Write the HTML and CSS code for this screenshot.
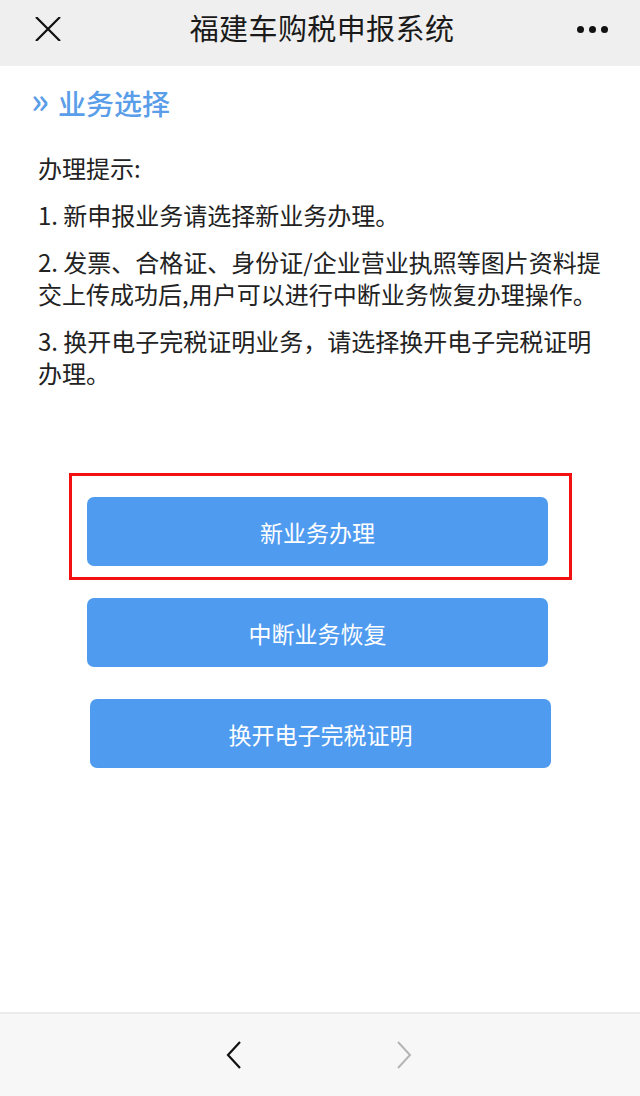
FILE: index.html
```html
<!DOCTYPE html>
<html lang="zh-CN">
<head>
  <meta charset="UTF-8">
  <meta name="viewport" content="width=device-width, initial-scale=1.0">
  <title>福建车购税申报系统</title>
  <link rel="stylesheet" href="styles.css">
</head>
<body>
<div class="page">
  <div class="topbar">
    <span class="icon-close">
      <svg width="26" height="24" viewBox="0 0 26 24">
        <path d="M1 0 L25 24 M25 0 L1 24" stroke="#111" stroke-width="2.2" fill="none"/>
      </svg>
    </span>
    <h1 class="topbar-title">福建车购税申报系统</h1>
    <span class="icon-more">
      <i></i><i></i><i></i>
    </span>
  </div>

  <div class="content">
    <h2 class="section-title"><span class="arrows">»</span>业务选择</h2>

    <div class="tips">
      <p>办理提示:</p>
      <p>1. 新申报业务请选择新业务办理。</p>
      <p>2. 发票、合格证、身份证/企业营业执照等图片资料提<br>交上传成功后,用户可以进行中断业务恢复办理操作。</p>
      <p>3. 换开电子完税证明业务，请选择换开电子完税证明<br>办理。</p>
    </div>

    <div class="actions">
      <div class="highlight">
        <button class="btn">新业务办理</button>
      </div>
      <button class="btn btn-resume">中断业务恢复</button>
      <button class="btn btn-reissue">换开电子完税证明</button>
    </div>
  </div>

  <div class="bottombar">
    <svg width="18" height="30" viewBox="0 0 18 30">
      <path d="M15 2 L3 15 L15 28" stroke="#111" stroke-width="2.2" fill="none"/>
    </svg>
    <svg width="18" height="30" viewBox="0 0 18 30">
      <path d="M3 2 L15 15 L3 28" stroke="#b5b5b5" stroke-width="2" fill="none"/>
    </svg>
  </div>
</div>
</body>
</html>
```

FILE: styles.css
```css
body {
  margin: 0;
  padding: 0;
  font-family: "Noto Sans CJK SC", "Noto Sans", sans-serif;
  color: #222;
  background: #fff;
}
.page {
  height: 1096px;
  display: flex;
  flex-direction: column;
}
.topbar {
  height: 66px;
  background: #efefef;
  display: flex;
  align-items: center;
  justify-content: space-between;
  padding: 0 32px 0 35px;
  box-sizing: border-box;
  flex-shrink: 0;
}
.icon-close {
  display: flex;
  margin-top: -8px;
}
.topbar-title {
  margin: 0 0 12px 6px;
  font-size: 29px;
  font-weight: 400;
  letter-spacing: 0.4px;
  color: #1a1a1a;
}
.icon-more {
  display: flex;
  gap: 5px;
  margin-top: -8px;
}
.icon-more i {
  width: 7px;
  height: 7px;
  border-radius: 50%;
  background: #111;
}

.content {
  flex: 1;
  padding: 0 0 0 38px;
}
.section-title {
  margin: 17px 0 0 -7px;
  font-size: 28px;
  font-weight: 500;
  color: #5a9de8;
  line-height: 40px;
}
.arrows {
  font-size: 36px;
  font-weight: 500;
  line-height: 0;
  margin-right: 9px;
  position: relative;
  top: -1px;
}
.tips {
  margin-top: 29px;
  font-size: 24px;
  line-height: 32px;
  color: #222;
}
.tips p {
  margin: 0 0 15px;
}

.actions {
  margin-top: 84px;
  margin-left: -38px;
  display: flex;
  flex-direction: column;
  align-items: flex-start;
}
.highlight {
  margin-left: 69px;
  width: 503px;
  height: 107px;
  box-sizing: border-box;
  border: 3px solid #f31010;
  padding: 21px 0 0 15px;
}
.btn {
  width: 461px;
  height: 69px;
  border: none;
  border-radius: 7px;
  background: #4f9bf0;
  color: #fff;
  font-family: "Noto Sans CJK SC", sans-serif;
  font-size: 23px;
  cursor: pointer;
  padding: 0;
}
.btn-resume {
  margin: 18px 0 0 87px;
}
.btn-reissue {
  margin: 32px 0 0 90px;
}

.bottombar {
  height: 84px;
  flex-shrink: 0;
  border-top: 2px solid #ebebeb;
  background: #f7f7f8;
  box-sizing: border-box;
  display: flex;
  justify-content: center;
  align-items: center;
  gap: 152px;
  padding-right: 2px;
}
```
